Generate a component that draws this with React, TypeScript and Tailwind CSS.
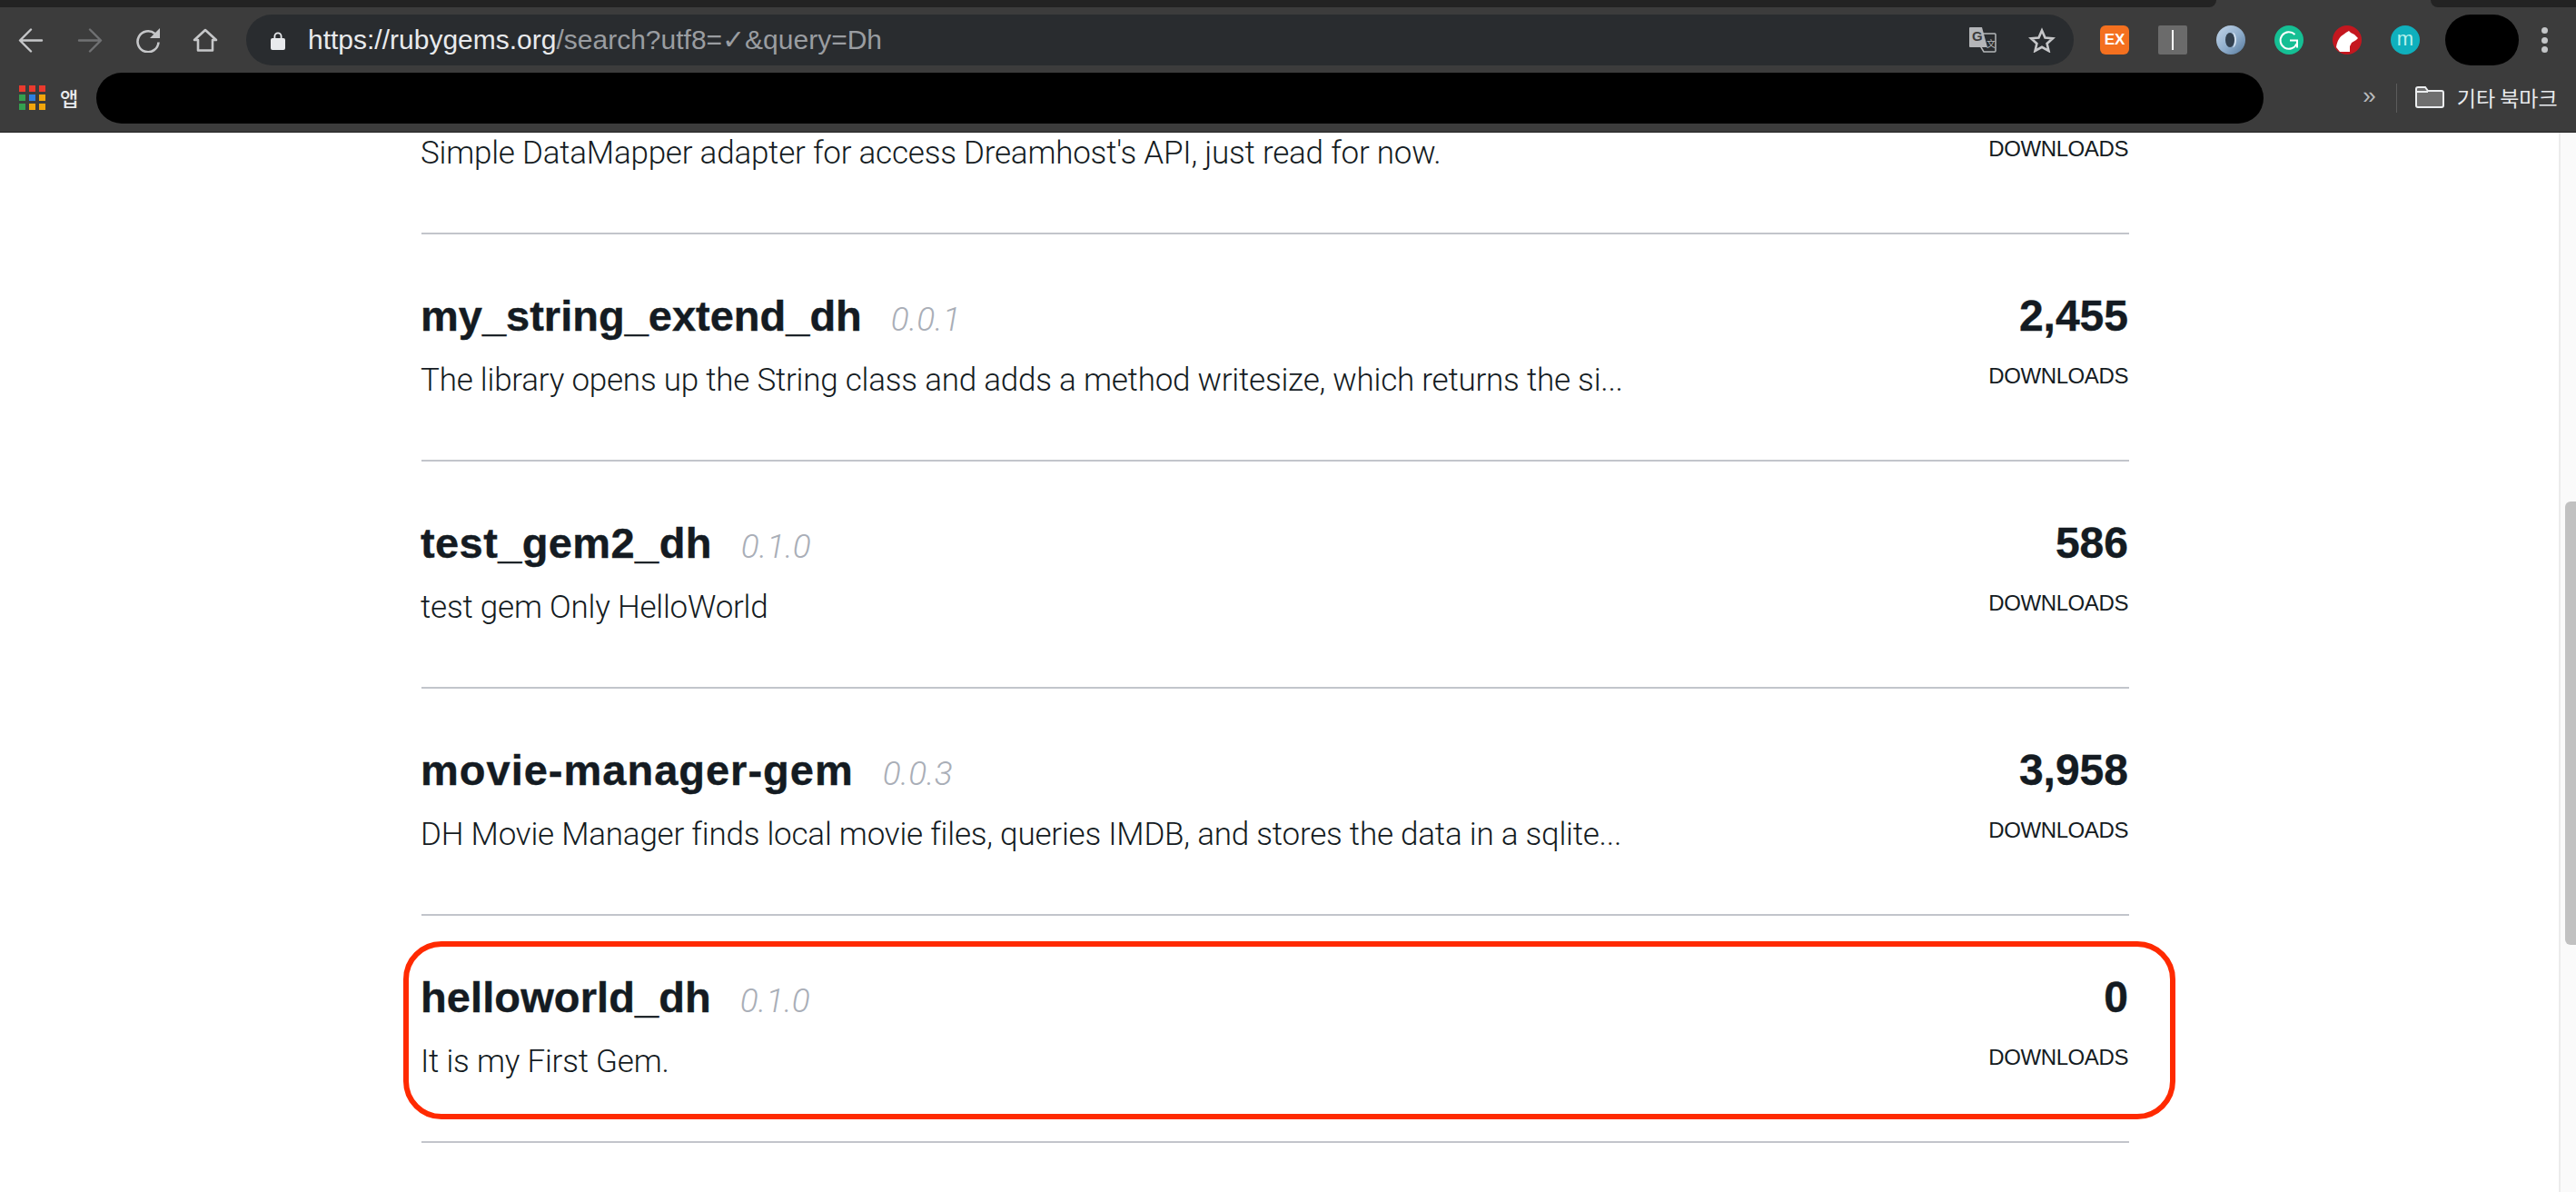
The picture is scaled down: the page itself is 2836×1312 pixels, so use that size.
const GEMS = [
	{ name: "", version: "", desc: "Simple DataMapper adapter for access Dreamhost's API, just read for now.", count: "", nameClass: "" },
	{ name: "my_string_extend_dh", version: "0.0.1", desc: "The library opens up the String class and adds a method writesize, which returns the si...", count: "2,455", nameClass: "" },
	{ name: "test_gem2_dh", version: "0.1.0", desc: "test gem Only HelloWorld", count: "586", nameClass: "tracking-[0.4px]" },
	{ name: "movie-manager-gem", version: "0.0.3", desc: "DH Movie Manager finds local movie files, queries IMDB, and stores the data in a sqlite...", count: "3,958", nameClass: "tracking-[1px]" },
	{ name: "helloworld_dh", version: "0.1.0", desc: "It is my First Gem.", count: "0", nameClass: "tracking-[0.1px]", marked: true },
];

const APP_DOTS = [
	"bg-[#ea3a2e]", "bg-[#ea3a2e]", "bg-[#ea3a2e]",
	"bg-[#34a04f]", "bg-[#2f7fe0]", "bg-[#f2a60c]",
	"bg-[#34a04f]", "bg-[#f2a60c]", "bg-[#f2a60c]",
];

function Toolbar() {
	return (
		<div className="flex h-[72px] items-start bg-[#3c3c3c] pl-[20px] text-[#c6c7c9]">
			<svg className="mt-[22px] size-[28px]" viewBox="0 0 28 28" fill="none" stroke="currentColor" strokeWidth="2.4" strokeLinecap="round" strokeLinejoin="round">
				<path d="M26 14.500 H3 M14 2.500 L2 14.500 L14 26.500" />
			</svg>
			<svg className="ml-[37px] mt-[22px] size-[28px] text-[#707173]" viewBox="0 0 28 28" fill="none" stroke="currentColor" strokeWidth="2.4" strokeLinecap="round" strokeLinejoin="round">
				<path d="M2 14.500 H25 M14 2.500 L26 14.500 L14 26.500" />
			</svg>
			<svg className="ml-[36px] mt-[22px] size-[28px]" viewBox="0 0 28 28" fill="none">
				<path d="M21.500 7 A11.500 11.500 0 1 0 25.500 16.500" stroke="currentColor" strokeWidth="2.600" />
				<path d="M27 1 V12 H16 Z" fill="currentColor" />
			</svg>
			<svg className="ml-[35px] mt-[23px] h-[26px] w-[28px]" viewBox="0 0 28 26" fill="none" stroke="currentColor" strokeWidth="2.600">
				<path d="M14 2 L26 13 H22 V24.500 H6 V13 H2 Z" strokeLinejoin="round" />
			</svg>

			<div className="ml-[31px] mt-[8px] flex h-[56px] w-[2012px] items-center rounded-full bg-[#292c2f] pl-[27px] pr-[20px]">
				<svg className="h-[21px] w-[16px]" viewBox="0 0 16 21" fill="#e8eaed">
					<path d="M3.5 9V6a4.5 4.5 0 0 1 9 0v3h-1.8V6a2.7 2.7 0 0 0-5.400 0v3z" />
					<rect y="8" width="16" height="13" rx="2" />
				</svg>
				<span className="ml-[25px] whitespace-nowrap font-['Liberation_Sans',sans-serif] text-[30px] leading-none text-[#e8eaed]">
					https://rubygems.org<span className="text-[#9a9da1]">/search?utf8=✓&amp;query=Dh</span>
				</span>
				<svg className="ml-auto h-[28px] w-[30px]" viewBox="0 0 30 28">
					<path d="M13 7 H28 a1 1 0 0 1 1 1 V26 a1 1 0 0 1-1 1 H16 L13 22 Z" fill="#292c2f" stroke="#b4b6b9" strokeWidth="1.5" />
					<path d="M1 0 H14 L20 22 H1 a1 1 0 0 1-1-1 V1 a1 1 0 0 1 1-1 Z" fill="#b4b6b9" />
					<text x="3" y="15" fontSize="15" fontWeight="700" fill="#3c3c3c" fontFamily="Liberation Sans">G</text>
					<text x="19" y="22" fontSize="10" fill="#b4b6b9" fontFamily="Noto Sans CJK SC">文</text>
				</svg>
				<svg className="ml-[35px] h-[28px] w-[30px]" viewBox="0 0 30 28" fill="none" stroke="#c6c7c9" strokeWidth="2.600" strokeLinejoin="miter">
					<path d="M15 3.500 L18.500 11.500 L27 12.300 L20.600 18 L22.500 26 L15 21.800 L7.500 26 L9.400 18 L3 12.300 L11.500 11.500 Z" />
				</svg>
			</div>

			<div className="ml-[29px] mt-[20px] flex items-start gap-[32px]">
				<div className="flex h-[32px] w-[32px] items-center justify-center rounded-[6px] bg-[#f4701f] font-['Liberation_Sans',sans-serif] text-[17px] font-bold text-white">
					EX
				</div>
				<div className="flex h-[32px] w-[32px] items-center justify-center rounded-[2px] bg-[#6b6b6b]">
					<div className="h-[22px] w-[2px] bg-white" />
				</div>
				<svg className="size-[32px]" viewBox="0 0 32 32">
					<defs>
						<linearGradient id="ring" x1="0" y1="0" x2="1" y2="1">
							<stop offset="0" stopColor="#c3d6ea" />
							<stop offset="0.55" stopColor="#8fadcb" />
							<stop offset="1" stopColor="#54779a" />
						</linearGradient>
					</defs>
					<circle cx="16" cy="16" r="16" fill="url(#ring)" />
					<ellipse cx="15" cy="16" rx="5" ry="8" fill="#33404e" />
					<path d="M18 7.500 C23 9 23.500 23 18 24.500 C21 20 21 12 18 7.500 Z" fill="#dbe7f3" />
				</svg>
				<svg className="size-[32px]" viewBox="0 0 32 32" fill="none">
					<circle cx="16" cy="16" r="16" fill="#15bf94" />
					<path d="M22.500 10 A9.300 9.300 0 1 0 24.500 20 M17 16.500 H25 V24.500" stroke="#fff" strokeWidth="2" />
				</svg>
				<svg className="size-[32px]" viewBox="0 0 32 32">
					<circle cx="16" cy="16" r="16" fill="#c4171f" />
					<path d="M4 24 C5 17 8 12 12 10 C14 8.500 16 7 18 6 L20 8 L24 10 L28 14 L26 16 L21 19 L19 23 L19 29 L8 29 Z" fill="#fff" />
				</svg>
				<div className="flex h-[32px] w-[32px] items-center justify-center rounded-full bg-[#0fb0bd] pb-[3px] font-['Liberation_Sans',sans-serif] text-[22px] text-[#b7f0ec]">
					m
				</div>
			</div>

			<div className="ml-[28px] mt-[8px] h-[56px] w-[81px] rounded-full bg-black" />
			<div className="ml-[25px] mt-[22px] flex flex-col gap-[3.500px]">
				<div className="size-[7px] rounded-full bg-[#c4c6c8]" />
				<div className="size-[7px] rounded-full bg-[#c4c6c8]" />
				<div className="size-[7px] rounded-full bg-[#c4c6c8]" />
			</div>
		</div>
	);
}

function BookmarkBar() {
	return (
		<div className="flex h-[66px] items-start border-b border-[#222] bg-[#3c3c3c] pl-[21px] text-[#e8eaed]">
			<div className="mt-[14px] grid grid-cols-3 gap-x-[4px] gap-y-[3px]">
				{APP_DOTS.map((color, i) => (
					<div key={i} className={`h-[7px] w-[7px] ${color}`} />
				))}
			</div>
			<span className="ml-[16px] mt-[13px] font-['Noto_Sans_CJK_KR',sans-serif] text-[22px] font-medium leading-[28px]">앱</span>
			<div className="ml-[20px] h-[56px] w-[2386px] rounded-full bg-black" />
			<span className="ml-[109px] mt-[11px] font-['Liberation_Sans',sans-serif] text-[26px] leading-[28px] text-[#b9bbbd]">»</span>
			<div className="ml-[22px] mt-[12px] h-[32px] w-px bg-[#5c5c5c]" />
			<svg className="ml-[20px] mt-[15px] h-[24px] w-[32px]" viewBox="0 0 32 24" fill="#6f6f6f" stroke="#eceef0" strokeWidth="2">
				<path d="M1 3 a2 2 0 0 1 2-2 H11 L14 5 H29 a2 2 0 0 1 2 2 V21 a2 2 0 0 1-2 2 H3 a2 2 0 0 1-2-2 Z" />
				<path d="M1 6 H14" fill="none" />
			</svg>
			<span className="ml-[14px] mt-[13px] whitespace-nowrap font-['Noto_Sans_CJK_KR',sans-serif] text-[23px] leading-[28px]">기타 북마크</span>
		</div>
	);
}

function GemRow({ name, version, desc, count, nameClass, marked }: (typeof GEMS)[number] & { marked?: boolean }) {
	return (
		<div className="relative flex h-[250px] shrink-0 justify-between border-b-2 border-[#c2c5cb] pt-[62px] text-[#141b22]">
			<div className="-ml-[1px]">
				<div className="flex h-[56px] items-baseline">
					<span className={`font-['Liberation_Sans',sans-serif] text-[47px] font-bold leading-[56px] [-webkit-text-stroke:0.4px_#141b22] ${nameClass}`}>{name}</span>
					{version && (
						<span className="ml-[32px] font-['Roboto',sans-serif] text-[37px] font-light italic leading-[56px] text-[#a9aeb7]">
							{version}
						</span>
					)}
				</div>
				<p className="mt-[22px] whitespace-nowrap font-['Roboto',sans-serif] text-[35px] font-light leading-[42px] tracking-[-0.22px]">{desc}</p>
			</div>
			<div className="mr-[1px] flex flex-col items-end">
				<span className="h-[56px] font-['Liberation_Sans',sans-serif] text-[48px] font-bold leading-[56px] [-webkit-text-stroke:0.4px_#141b22]">{count}</span>
				<span className="mt-[23px] font-['Liberation_Sans',sans-serif] text-[24px] leading-[30px] tracking-[-0.4px]">DOWNLOADS</span>
			</div>
			{marked && <div className="absolute -left-[20px] -right-[51px] top-[28px] h-[196px] rounded-[42px] border-[6px] border-[#ff2a00]" />}
		</div>
	);
}

export default function App() {
	return (
		<div className="flex h-[1312px] w-[2836px] flex-col overflow-hidden bg-white">
			<div className="flex h-[8px] justify-between bg-[#3c3c3c]">
				<div className="w-[2440px] rounded-br-[8px] bg-[#232323]" />
				<div className="w-[160px] rounded-bl-[8px] bg-[#232323]" />
			</div>
			<Toolbar />
			<BookmarkBar />
			<div className="flex min-h-0 flex-1">
				<main className="min-w-0 flex-1 overflow-hidden pl-[464px] pr-[473px]">
					<div className="-mt-[138px] flex flex-col">
						{GEMS.map((gem, i) => (
							<GemRow key={i} {...gem} />
						))}
					</div>
				</main>
				<div className="w-[19px] border-l-2 border-[#ececec] bg-[#fafafa] pl-[5px] pt-[406px]">
					<div className="h-[488px] rounded-l-[6px] bg-[#c1c1c1]" />
				</div>
			</div>
		</div>
	);
}
